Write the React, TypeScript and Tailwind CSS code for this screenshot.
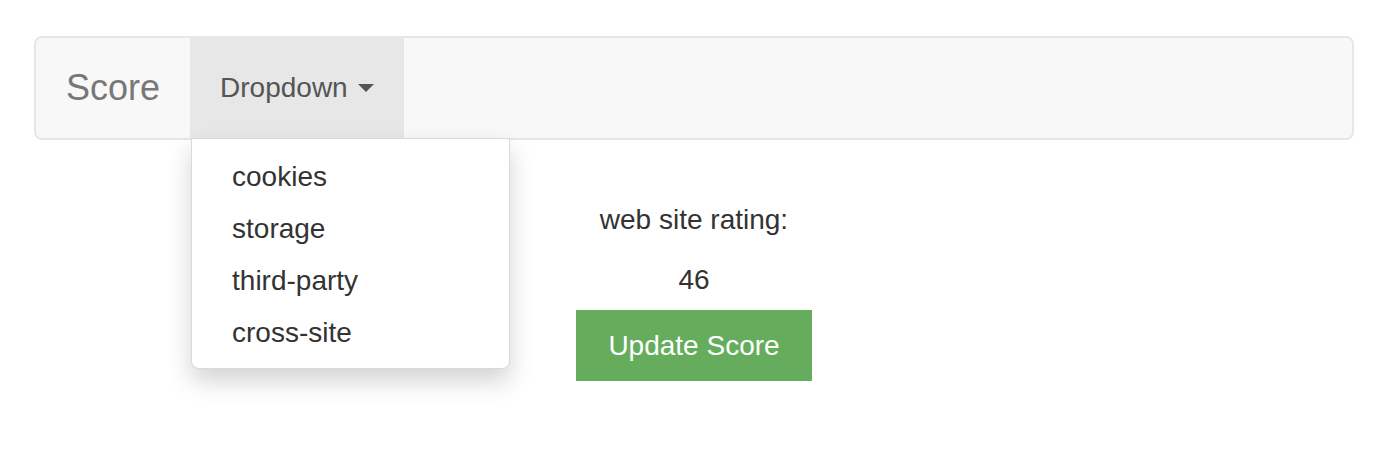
import { useState } from 'react'

const items = ['cookies', 'storage', 'third-party', 'cross-site']

export default function App() {
  const [score, setScore] = useState(46)

  return (
    <div className="min-h-[456px] bg-white pt-[36px] pl-[34px] font-['Liberation_Sans',Arial,sans-serif] text-[#333]">
      <nav className="w-[1320px] h-[104px] flex items-stretch border-2 border-[#e7e7e7] rounded-[8px] bg-[#f8f8f8]">
        <a className="flex items-center px-[30px] text-[36px] text-[#777]">Score</a>
        <div className="relative">
          <button className="h-full flex items-center px-[30px] bg-[#e7e7e7] text-[28px] text-[#555]">
            Dropdown
            <span className="ml-[10px] w-0 h-0 border-t-[8px] border-t-[#555] border-x-[8px] border-x-transparent" />
          </button>
          <ul className="absolute left-[1px] top-full z-10 w-[319px] pt-[12px] pb-[9px] bg-white border border-[rgba(0,0,0,0.15)] rounded-b-[8px] shadow-[0_12px_24px_rgba(0,0,0,0.175)]">
            {items.map((item) => (
              <li key={item}>
                <a className="block px-[40px] py-[6px] text-[28px] leading-[40px] text-[#333]">{item}</a>
              </li>
            ))}
          </ul>
        </div>
      </nav>

      <div className="w-[1320px] mt-[60px] flex flex-col items-center text-[28px] leading-[40px]">
        <p>web site rating:</p>
        <p className="mt-[20px]">{score}</p>
        <button
          onClick={() => setScore(score)}
          className="mt-[10px] w-[236px] h-[71px] bg-[#65ad5d] text-white text-[28px]"
        >
          Update Score
        </button>
      </div>
    </div>
  )
}
